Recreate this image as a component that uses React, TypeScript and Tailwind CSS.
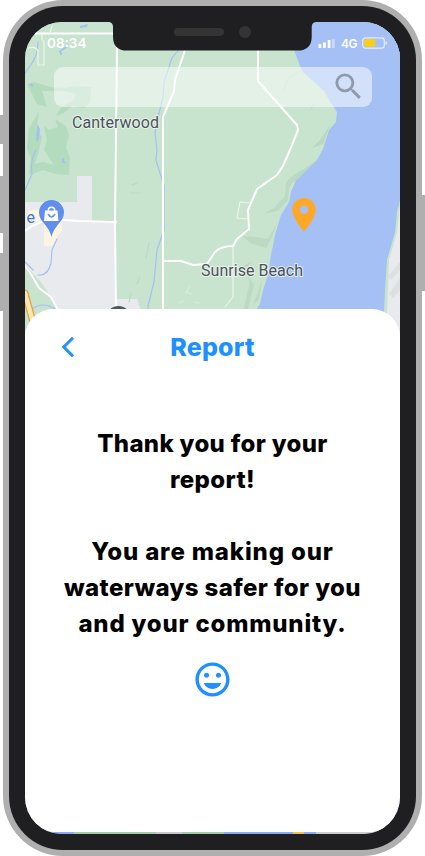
function MapView() {
  return (
    <svg className="block h-[330px] w-full" viewBox="25 22 375 330" fill="none" strokeLinejoin="round" strokeLinecap="round">
      <rect x="25" y="22" width="375" height="330" fill="#c8e3ce" />
      <path d="M25 202H77V176H92V221H116V299H137L142 312V352H25V322L60 318 47 291 40 281 25 265Z" fill="#e8eaed" />
      <path d="M25 265L31 274 40 288 51 299 58 312 25 330Z" fill="#c8e3ce" />
      {/* golf course */}
      <path d="M27 84L34 82 50 87 64 88 75 86 91 87 90 102 84 108 72 106 64 113 56 116 60 109 66 104 74 100 76 94 64 91 42 91 47 107 37 104Z" fill="#b3dbbd" />
      <path d="M39 112L29 128 27 148 31 158 29 175 43 170 56 174 69 175 70 158 66 147 69 135 66 126 55 119 58 127 49 130 44 126 47 140 44 150 54 165 43 162 35 164 39 150 42 137 36 130Z" fill="#b3dbbd" />
      {/* bay */}
      <path d="M292 45L302 71 324 91 331 103 337 112 336 122 329 130 323 149 317 160 297 178 291 192 289 202 281 215 275 235 271 255 268 275 263 290 260 304 255 312H400V22H292Z" fill="#a4c0f5" />
      <path d="M400 200L397 212 395 232 387 260 385 290 384 312V352H400Z" fill="#c8e3ce" />
      <path d="M400 205L397 232 389 260 388 290 387 312V352H400Z" fill="#e8eaed" />
      <path d="M400 262L388 276 391 280 400 270M400 278L389 294 393 298 400 290" fill="#dddfe1" />
      {/* relief */}
      <path d="M298 73Q286 76 284 91" stroke="#bfdcc5" strokeWidth="1.5" />
      <path d="M309 113L318 97 312 106ZM330 125L321 139 312 148 323 144ZM317 160L300 172 289 184 296 181Z" fill="#b9d8c0" />
      <path d="M316 162L295 174 286 182 285 196 274 208 263 214 278 211 288 200 289 188 296 176Z" fill="#bcdac3" />
      <path d="M278 221L268 239 256 237 242 236 252 244 266 248 272 237ZM253 261L244 270 254 285 247 312 243 312 250 282 243 266ZM263 276L258 292 253 305 259 299Z" fill="#bcdac3" />
      <path d="M130 193h10M132 185l5-2M149 243l-3 15M140 277l-3 7M131 293l-2 9" stroke="#bdd9c3" strokeWidth="1.200" />
      <path d="M190 286l-4 6 5 2M179 303l4-2M194 302l5 1" stroke="#d5e9d7" strokeWidth="1.500" />
      {/* streams */}
      <path d="M80 26L88 24 87 27 80 28ZM37 124L40 129 39 139 36 142Z" fill="#a4c0f5" />
      <path d="M30.500 84.500l2 1M62 50l4-3M61 54l-1-3M63 159v3l1.500 .5" stroke="#a4c0f5" strokeWidth="2" />
      <path d="M38 42Q38 56 30 66L25 73M36 150Q30 160 32 174L25 190M180 48L172 58 164 82 163 97 158 118 155 133 157 149 156 160 164 186 164 230 157 250 154 282 148 306V312M57 239L52 250 51 263Q48 276 38 275M25 262L33 270M32 309Q43 301 55 309" stroke="#a4c0f5" strokeWidth="1.200" />
      {/* roads */}
      <path d="M25 33.500H113M117 45L115 221 116 312M116 222L78 221 64 220Q42 217 25 231M25 266L31 274 39 288 51 297 58 310" stroke="#fff" strokeWidth="2" />
      <path d="M185 50L175 80 174 91 163 117V312M163 261H181L193 265 207 264 215 252Q221 246 233 246L237 239 249 229 248 210 257 189 277 175 283 166 290 150 298 130 297 125 258 81V50" stroke="#fff" strokeWidth="2" />
      <path d="M28 48Q36 46 38 51V65H44V42L42 39V33M50 33L52 26M250 203L240 202 237 218 247 219M233 246V297L225 307" stroke="#edf6ef" strokeWidth="1.200" />
      <path d="M25 293L36 333" stroke="#e4a33b" strokeWidth="7" />
      <path d="M25 293L36 333" stroke="#fce6b3" strokeWidth="4.500" />
      <path d="M28 211L40 209V222L28 220ZM44 222H61L62 231 57 237 52 246H44Z" fill="#fdf5df" />
      <path d="M51.500 237C49 225 39 222 39 212.500A12.500 12.500 0 0 1 64 212.500C64 222 54 225 51.500 237Z" fill="#5f8eed" />
      <path d="M45 210.500H57.500L58.500 221H44Z" fill="#fff" />
      <path d="M48.300 210.500C48.300 206 54.700 206 54.700 210.500" stroke="#fff" strokeWidth="1.500" />
      <path d="M48.300 214.500Q51.500 219.500 54.700 214.500" stroke="#5f8eed" strokeWidth="1.500" />
      <circle cx="118.500" cy="318.500" r="12.500" fill="#555759" />
      <g fontFamily="Roboto, sans-serif" paintOrder="stroke" stroke="#f3faf4" strokeOpacity=".8" strokeWidth="2" fill="#4b505a" fontSize="16">
        <text x="72" y="128" textLength="87">Canterwood</text>
        <text x="201" y="275.500" textLength="102">Sunrise Beach</text>
        <text x="26.500" y="223" fill="#3e72d8">e</text>
      </g>
      <g transform="translate(283.900 194.600) scale(1.675)">
        <path d="M12 2C8.130 2 5 5.130 5 9c0 5.250 7 13 7 13s7-7.750 7-13c0-3.870-3.130-7-7-7zm0 9.500a2.500 2.500 0 1 1 0-5 2.500 2.500 0 0 1 0 5z" fill="#ffa726" />
      </g>
    </svg>
  );
}

function StatusIcons() {
  return (
    <div className="flex items-center text-white">
      <svg className="h-[9px] w-[18px]" viewBox="0 0 18 9" fill="#fff">
        <rect x="0.500" y="5" width="2.800" height="4" rx=".6" />
        <rect x="5" y="3.300" width="2.800" height="5.700" rx=".6" />
        <rect x="9.700" y="1" width="2.800" height="8" rx=".6" />
        <rect x="14" width="2.800" height="9" rx=".6" opacity=".4" />
      </svg>
      <span className="ml-[5px] w-[16px] pt-px text-[12px] leading-none font-semibold tracking-[-0.4px]">4G</span>
      <svg className="ml-[5px] h-3 w-[26px]" viewBox="0 0 26 12" fill="none">
        <rect x=".8" y=".8" width="21.500" height="10.400" rx="2.700" stroke="#fff" strokeOpacity=".7" strokeWidth="1.200" />
        <rect x="2.200" y="2.200" width="11" height="7.600" rx="1" fill="#ffcc17" />
        <path d="M23.500 4V8Q25 7.300 25 6T23.500 4Z" fill="#fff" fillOpacity=".75" />
      </svg>
    </div>
  );
}

function Notch() {
  return (
    <svg className="absolute top-0 left-[83px] h-[29px] w-[208px]" viewBox="108 22 208 29">
      <path d="M108 22H109Q113 22.500 113 27V36.500Q113 50.600 127 50.600H297.500Q311.700 50.600 311.700 36.500V27Q311.700 22.500 316 22Z" fill="#1f1f21" />
      <rect x="174" y="28" width="50" height="8" rx="4" fill="#343434" />
      <circle cx="245" cy="32" r="6" fill="#343434" />
    </svg>
  );
}

const lines = [
  ["Thank you for your", "tracking-[0.35px]"],
  ["report!", "tracking-[0.4px]"],
  ["\u00a0", ""],
  ["You are making our", "tracking-[0.85px]"],
  ["waterways safer for you", "tracking-[0.4px]"],
  ["and your community.", "tracking-[0.8px]"],
];

export default function App() {
  return (
    <div className="relative h-[856px] w-[425px] overflow-hidden bg-white font-['Inter',sans-serif]">
      <i className="absolute top-[115px] left-0 h-[29px] w-1 bg-[#afafaf]" />
      <i className="absolute top-[176px] left-0 h-[57px] w-1 bg-[#afafaf]" />
      <i className="absolute top-[253px] left-0 h-[58px] w-1 bg-[#afafaf]" />
      <i className="absolute top-[195px] right-0 h-24 w-1 bg-[#afafaf]" />
      <div className="relative mx-[3px] h-full rounded-[60px] bg-[#afafaf] p-[6px]">
        <div className="h-full rounded-[54px] bg-[#1f1f21] px-4 py-4">
          <div className="relative flex h-[812px] flex-col overflow-hidden rounded-[37px] bg-[#a4c0f5]">
            <div className="relative h-[287px] shrink-0">
              <MapView />
              <Notch />
              <div className="absolute inset-x-0 top-[13px] flex items-center justify-between pr-[12px] pl-[22px]">
                <span className="text-[13.500px] leading-4 font-semibold text-white">08:34</span>
                <StatusIcons />
              </div>
              <div className="absolute top-[45px] left-[29px] flex h-10 w-[318px] items-center justify-end rounded-[9px] bg-white/50 pr-[6px]">
                <svg className="mb-px h-[35px] w-[35px]" viewBox="0 0 24 24" fill="#000" fillOpacity=".31">
                  <path d="M15.500 14h-.79l-.28-.27A6.471 6.471 0 0 0 16 9.500 6.500 6.500 0 1 0 9.500 16c1.610 0 3.090-.59 4.230-1.570l.27.28v.79l5 4.990L20.490 19l-4.990-5zm-6 0C7.010 14 5 11.990 5 9.500S7.010 5 9.500 5 14 7.010 14 9.500 11.990 14 9.500 14z" />
                </svg>
              </div>
            </div>
            <div className="relative flex h-[523px] shrink-0 flex-col items-center rounded-[28px] bg-white">
              <header className="grid h-[77px] w-full grid-cols-[60px_1fr_60px] items-center">
                <svg className="mb-px ml-[31px] h-6 w-6" viewBox="0 0 24 24" fill="#1e90ff" stroke="#1e90ff" strokeWidth=".6">
                  <path d="M17.770 3.770 16 2 6 12l10 10 1.770-1.770L9.540 12z" />
                </svg>
                <h1 className="mb-[2px] text-center text-[25px] leading-9 font-extrabold tracking-[0.2px] text-[#1e90ff]">Report</h1>
              </header>
              <div className="mt-[40px] text-center text-[24px] leading-9 font-extrabold text-black">
                {lines.map(([text, tracking], i) => (
                  <p key={i} className={`whitespace-nowrap ${tracking}`}>{text}</p>
                ))}
              </div>
              <svg className="mt-[17px] h-[41px] w-[41px]" viewBox="0 0 24 24" fill="#1e90ff">
                <path d="M11.990 2C6.470 2 2 6.480 2 12s4.470 10 9.990 10C17.520 22 22 17.520 22 12S17.520 2 11.990 2zM12 20c-4.420 0-8-3.580-8-8s3.580-8 8-8 8 3.580 8 8-3.580 8-8 8zm3.500-9c.83 0 1.500-.67 1.500-1.500S16.330 8 15.500 8 14 8.670 14 9.500s.67 1.500 1.500 1.500zm-7 0c.83 0 1.500-.67 1.500-1.500S9.330 8 8.500 8 7 8.670 7 9.500 7.670 11 8.500 11zm3.500 6.500c2.330 0 4.310-1.460 5.110-3.500H6.890c.8 2.040 2.780 3.500 5.110 3.500z" />
              </svg>
            </div>
            <div className="relative flex h-[2px] shrink-0">
              <i className="w-[49px] bg-[#8caae8]" />
              <i className="w-[82px] bg-[#a4c9ac]" />
              <i className="w-[26px] bg-[#c8c8cc]" />
              <i className="w-[42px] bg-[#a4c9ac]" />
              <i className="w-[69px] bg-[#8caae8]" />
              <i className="w-[11px] bg-[#ecc15c]" />
              <i className="w-[12px] bg-[#8caae8]" />
              <i className="flex-1 bg-[#cccccf]" />
            </div>
          </div>
        </div>
      </div>
    </div>
  );
}
